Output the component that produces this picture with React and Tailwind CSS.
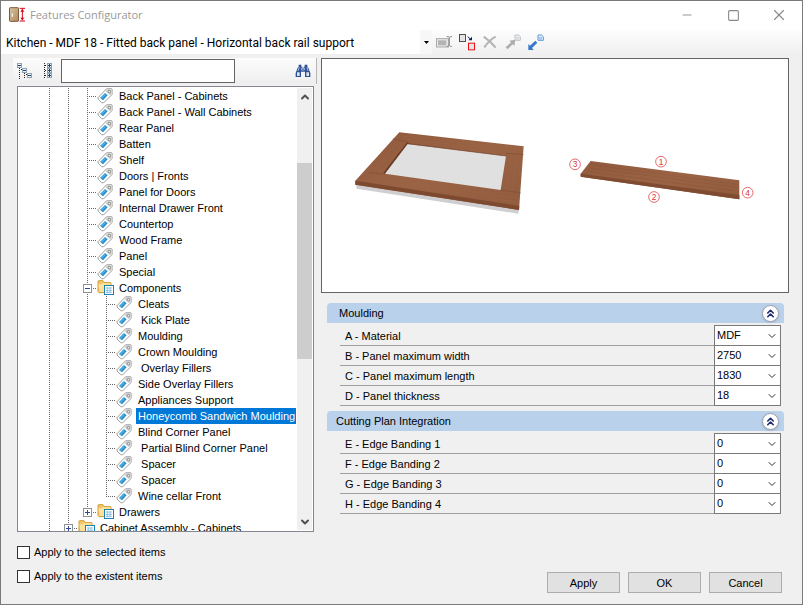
import React, { useState } from 'react'
import { ChevronDown, ChevronUp, ChevronsUp, Minus, Square, X } from 'lucide-react'

// lines: guide columns drawn before the node's own branch
const nodes = [
  { label: 'Back Panel - Cabinets', lines: 2 },
  { label: 'Back Panel - Wall Cabinets', lines: 2 },
  { label: 'Rear Panel', lines: 2 },
  { label: 'Batten', lines: 2 },
  { label: 'Shelf', lines: 2 },
  { label: 'Doors | Fronts', lines: 2 },
  { label: 'Panel for Doors', lines: 2 },
  { label: 'Internal Drawer Front', lines: 2 },
  { label: 'Countertop', lines: 2 },
  { label: 'Wood Frame', lines: 2 },
  { label: 'Panel', lines: 2 },
  { label: 'Special', lines: 2 },
  { label: 'Components', lines: 2, folder: 'open' },
  { label: 'Cleats', lines: 3 },
  { label: ' Kick Plate', lines: 3 },
  { label: 'Moulding', lines: 3 },
  { label: 'Crown Moulding', lines: 3 },
  { label: ' Overlay Fillers', lines: 3 },
  { label: 'Side Overlay Fillers', lines: 3 },
  { label: 'Appliances Support', lines: 3 },
  { label: 'Honeycomb Sandwich Moulding', lines: 3 },
  { label: 'Blind Corner Panel', lines: 3 },
  { label: ' Partial Blind Corner Panel', lines: 3 },
  { label: ' Spacer', lines: 3 },
  { label: ' Spacer', lines: 3 },
  { label: 'Wine cellar Front', lines: 3, last: true },
  { label: 'Drawers', lines: 2, folder: 'closed', last: true },
  { label: 'Cabinet Assembly - Cabinets', lines: 1, folder: 'closed' },
]

const groups = [
  {
    title: ' Moulding',
    fields: [
      { id: 'material', label: 'A - Material', value: 'MDF' },
      { id: 'max-width', label: 'B - Panel maximum width', value: '2750' },
      { id: 'max-length', label: 'C - Panel maximum length', value: '1830' },
      { id: 'thickness', label: 'D - Panel thickness', value: '18' },
    ],
  },
  {
    title: 'Cutting Plan Integration',
    fields: [
      { id: 'edge-1', label: 'E - Edge Banding 1', value: '0' },
      { id: 'edge-2', label: 'F - Edge Banding 2', value: '0' },
      { id: 'edge-3', label: 'G - Edge Banding 3', value: '0' },
      { id: 'edge-4', label: 'H - Edge Banding 4', value: '0' },
    ],
  },
]

function AppIcon() {
  return (
    <svg viewBox="0 0 48 48" className="size-4">
      <defs>
        <linearGradient id="door" x1="0" y1="0" x2="1" y2="1">
          <stop offset="0" stopColor="#d9c3a0" />
          <stop offset="1" stopColor="#b08a5c" />
        </linearGradient>
      </defs>
      <rect x="1.5" y="2" width="27" height="41" rx="2" fill="url(#door)" stroke="#7a5c3c" strokeWidth="3" />
      <path d="M10 19v10" stroke="#f2efe9" strokeWidth="4" />
      <path d="M32 4h16M32 42h16M40 6v34" stroke="#d6001c" strokeWidth="3" />
      <path d="M34 14l6-8 6 8zM34 32l6 8 6-8z" fill="#d6001c" />
    </svg>
  )
}

function TagIcon() {
  return (
    <svg viewBox="0 0 48 48" className="size-4 shrink-0">
      <path d="M3 29L29 2h15l3 3v13L20 44h-6L3 33z" fill="#fff" stroke="#8b8b8b" strokeWidth="2.5" strokeLinejoin="round" />
      <path d="M24 8l5-6h15l3 3v13l-6 6z" fill="#d4d4d4" />
      <circle cx="37" cy="11" r="4" fill="#eee" stroke="#777" strokeWidth="2.5" />
      <path d="M9 30l15-15 8 7-14 15z" fill="#2490d0" />
      <path d="M12 30l12-12 2 2-12 12z" fill="#63b9e8" />
    </svg>
  )
}

function FolderIcon() {
  return (
    <svg viewBox="0 0 48 48" className="size-4 shrink-0 overflow-visible">
      <path d="M3 4q0-2 2-2h13l5 6h19v30H6l-3-3z" fill="#f2c566" stroke="#d39a35" strokeWidth="3" />
      <path d="M4 13h10l3-3h24v5H22v21H8z" fill="#fce29b" />
      <rect x="22.5" y="16.5" width="27" height="27" fill="#fff" stroke="#1b80b8" strokeWidth="3" />
      <path d="M27 24h18M27 31h18M27 37h18M31 22v18M39 22v18" stroke="#8cc4e6" strokeWidth="3" />
    </svg>
  )
}

function Guide({ branch, last, toggle }) {
  return (
    <span className="relative h-4 w-[19px] shrink-0 pl-[9px]">
      <span
        className={`block bg-[repeating-linear-gradient(to_bottom,#666_0px,#666_1px,transparent_1px,transparent_2px)] bg-[length:1px_100%] bg-no-repeat ${last ? 'h-[9px]' : 'h-4'}`}
      >
        {branch && (
          <span className="block h-[9px] bg-[repeating-linear-gradient(to_right,#666_0px,#666_1px,transparent_1px,transparent_2px)] bg-[length:100%_1px] bg-bottom bg-no-repeat" />
        )}
      </span>
      {toggle && (
        <button
          aria-label={toggle === 'open' ? 'Collapse' : 'Expand'}
          className="absolute left-[5px] top-1 flex size-[9px] items-center justify-center border border-[#919191] bg-white"
        >
          <svg viewBox="0 0 5 5" className="size-[5px]" shapeRendering="crispEdges">
            <path d={toggle === 'open' ? 'M0 2h5v1H0z' : 'M0 2h5v1H0zM2 0h1v5H2z'} fill="#2b4a96" />
          </svg>
        </button>
      )}
    </span>
  )
}

function TreeRow({ node, selected, onSelect }) {
  return (
    <li className="flex h-4">
      {Array.from({ length: node.lines }, (_, i) => <Guide key={i} />)}
      <Guide branch last={node.last} toggle={node.folder} />
      {node.folder ? <FolderIcon /> : <TagIcon />}
      <button
        onClick={onSelect}
        className={`ml-1 whitespace-pre px-[2px] leading-4 ${selected ? 'bg-[#0078d7] text-white' : ''}`}
      >
        {node.label}
      </button>
    </li>
  )
}

function TreeToolbar() {
  return (
    <div className="flex h-[26px] items-center border-r border-[#b5b5b5] bg-linear-to-b from-[#fcfcfc] to-[#eeeeee] pl-1 pr-[5px]">
      <button aria-label="Collapse tree">
        <svg viewBox="0 0 16 16" className="size-4" shapeRendering="crispEdges">
          <path d="M2.5 5v11M7.500 10v6" stroke="#222" strokeDasharray="1 1" />
          <path d="M4 6.500h2M9 11.500h2" stroke="#222" strokeDasharray="1 1" />
          <g fill="#eef4f8" stroke="#8ba2b5">
            <path d="M.5 .5h4v4h-4zM5.500 5.500h4v4h-4zM10.500 10.500h4v4h-4z" />
          </g>
          <path d="M1 2.500h3M6 7.500h3M11 12.500h3" stroke="#223f66" />
        </svg>
      </button>
      <button aria-label="Expand tree" className="ml-2">
        <svg viewBox="0 0 16 16" className="size-4" shapeRendering="crispEdges">
          <path d="M3.500 0v16" stroke="#222" strokeDasharray="1 1" />
          <path d="M4 2.500h3M4 7.500h3M4 12.500h3" stroke="#222" strokeDasharray="1 1" />
          <path d="M6.500 .5h4v4h-4zM6.500 5.500h4v4h-4zM6.500 10.500h4v4h-4z" fill="#eef4f8" stroke="#8ba2b5" />
          <path d="M7 2.500h3M7 7.500h3M7 12.500h3M8.500 1v3M8.500 6v3M8.500 11v3" stroke="#223f66" />
        </svg>
      </button>
      <input
        aria-label="Search"
        className="ml-1 h-6 w-[174px] border border-[#646464] bg-white px-1 outline-none"
      />
      <button aria-label="Find" className="ml-auto">
        <svg viewBox="0 0 48 48" className="size-4">
          <path d="M11 5h8v6h3v6h4v-6h3V5h8v6l3 3 6 16v12H30V26H18v16H2V30l6-16 3-3z" fill="#2c4f93" />
          <path d="M6 28h8v11H6zM34 28h8v11h-8z" fill="#d5e3f5" />
          <path d="M13 12l-4 12M19 14v8M29 14v8M36 12l3 12" stroke="#9db9e2" strokeWidth="3" />
          <path d="M21 19h6v5h-6z" fill="#6c8cc4" />
        </svg>
      </button>
    </div>
  )
}

function Tree() {
  const [selected, setSelected] = useState(20)

  return (
    <div className="ml-1 mr-[3px] mt-[2px] flex min-h-0 flex-1 border border-[#828790] bg-white">
      <ul className="min-w-0 flex-1 overflow-hidden pl-[22px] pt-px">
        {nodes.map((node, i) => (
          <TreeRow key={i} node={node} selected={selected === i} onSelect={() => setSelected(i)} />
        ))}
      </ul>
      <div className="m-px flex w-[15px] shrink-0 flex-col bg-[#f0f0f0]">
        <button aria-label="Scroll up" className="flex h-[17px] items-center justify-center text-[#505050]">
          <ChevronUp size={12} strokeWidth={4} />
        </button>
        <div className="flex-[58]" />
        <div className="flex-[197] bg-[#cdcdcd]" />
        <div className="flex-[154]" />
        <button aria-label="Scroll down" className="flex h-[17px] items-center justify-center text-[#505050]">
          <ChevronDown size={12} strokeWidth={4} />
        </button>
      </div>
    </div>
  )
}

function CheckRow({ id, label }) {
  return (
    <div className="ml-1 flex h-6 items-center gap-1">
      <input id={id} type="checkbox" className="size-[13px] appearance-none border border-[#333] bg-white checked:bg-[#0078d7]" />
      <label htmlFor={id}>{label}</label>
    </div>
  )
}

function Preview() {
  const marks = [
    { n: 1, x: 303, y: 65 },
    { n: 2, x: 282, y: 171 },
    { n: 3, x: 45, y: 73 },
    { n: 4, x: 563, y: 158 },
  ]

  return (
    <div className="aspect-[468/235] border border-[#646464] bg-white">
      <svg viewBox="0 0 466 233" className="size-full">
        <defs>
          <linearGradient id="wood" x1="0" y1="0" x2="1" y2="1">
            <stop offset="0" stopColor="#91593d" />
            <stop offset="0.5" stopColor="#9a6344" />
            <stop offset="1" stopColor="#915b3e" />
          </linearGradient>
        </defs>
        {/* framed door */}
        <g transform="translate(18 61) scale(0.33333)">
          <path d="M48 194l2 12 485 75 2-14z" fill="#cfcfd1" />
          <path d="M178 37L551 79 537 270 46 194V182z" fill="url(#wood)" />
          <path d="M46 182l492 76-1 12L46 194z" fill="#7d4a2f" />
          <path d="M130 158L202 66l6 7-72 90z" fill="#6a3c26" />
          <path d="M203 72l295 36-16 102-347-49z" fill="#e0e0e0" />
          <path d="M203 71l295 37" stroke="#6f412b" strokeWidth="2" />
          <path d="M158 56l45 10M87 158l46 4M498 100l53 4M482 210l60 8" stroke="#7c492f" strokeWidth="1.500" />
          <path
            d="M190 48l340 37M200 58l330 36M100 172l420 62M80 178l450 68M165 75l-58 74M185 78l-64 82M530 110l-12 100M512 112l-14 92"
            stroke="#a06a48"
            strokeWidth="2"
            opacity="0.5"
          />
        </g>
        {/* edge banding strip */}
        <g transform="translate(238 81) scale(0.33333)">
          <path d="M92 63l446 58v57L62 110v-9z" fill="url(#wood)" />
          <path d="M62 101l476 64v13L62 110z" fill="#7f4c31" />
          <path d="M100 75l430 58M90 84l440 58M82 94l440 58" stroke="#7c4930" strokeWidth="2" opacity="0.3" />
          {marks.map((m) => (
            <g key={m.n}>
              <circle cx={m.x} cy={m.y} r="16" fill="#fff" stroke="#e24a50" strokeWidth="2.500" />
              <text x={m.x} y={m.y + 9} textAnchor="middle" fontSize="25" fill="#d8343c" className="font-['Liberation_Sans',sans-serif]">
                {m.n}
              </text>
            </g>
          ))}
        </g>
      </svg>
    </div>
  )
}

function Field({ field }) {
  return (
    <div className="flex h-5 items-end">
      <label htmlFor={field.id} className="h-5 flex-1 border-b border-[#a0a0a0] pl-[5px] leading-5">
        {field.label}
      </label>
      <div className="relative -mt-px h-[21px] w-[67px] shrink-0">
        <select id={field.id} className="block h-full w-full appearance-none border border-[#7a7a7a] bg-white pb-px pl-[2px] leading-4 outline-none">
          <option>{field.value}</option>
        </select>
        <ChevronDown size={12} strokeWidth={2} className="pointer-events-none absolute right-[3px] top-[5px] text-[#333]" />
      </div>
    </div>
  )
}

function Group({ group }) {
  return (
    <section className="mb-[5px] ml-[6px] mr-[5px]">
      <header className="flex h-5 items-center justify-between rounded-t-[4px] bg-[#b9d1ea] pl-[9px] pr-[5px]">
        <h2 className="whitespace-pre">{group.title}</h2>
        <button
          aria-label={`Collapse ${group.title.trim()}`}
          className="flex size-[17px] items-center justify-center rounded-full border border-[#9c9cae] bg-white text-[#1c2a6b] shadow"
        >
          <ChevronsUp size={13} strokeWidth={3} />
        </button>
      </header>
      <div className="ml-[13px] mr-[3px] pt-[3px]">
        {group.fields.map((field) => <Field key={field.id} field={field} />)}
      </div>
    </section>
  )
}

function ConfigToolbar() {
  return (
    <div className="flex h-6 items-center bg-linear-to-b from-[#fdfdfd] to-[#f0f0f0]">
      <div className="relative h-full w-[431px]">
        <select aria-label="Configuration" className="h-full w-full appearance-none bg-white pl-[5px] pt-px font-[Roboto,sans-serif] text-[12px] outline-none">
          <option>Kitchen - MDF 18 - Fitted back panel - Horizontal back rail support</option>
        </select>
        <span className="pointer-events-none absolute right-0 top-0 flex h-full w-3 items-center justify-center bg-[#f7f7f7]">
          <svg viewBox="0 0 5 3" className="h-[3px] w-[5px]"><path d="M0 0h5L2.500 3z" fill="#000" /></svg>
        </span>
      </div>
      <div className="ml-1 flex gap-[7px]">
        <button aria-label="Rename">
          <svg viewBox="0 0 48 48" className="size-4">
            <rect x="1.500" y="14" width="36" height="25" fill="#e8e8e8" stroke="#aaa" strokeWidth="3" />
            <rect x="6" y="19" width="25" height="15" fill="#b4b4b4" />
            <path d="M32 8h5l3 2 3-2h5M40 10v24M32 37h5l3-3 3 3h5" fill="none" stroke="#888" strokeWidth="3" />
          </svg>
        </button>
        <button aria-label="Duplicate">
          <svg viewBox="0 0 48 48" className="size-4 overflow-visible">
            <rect x="1.500" y="1.500" width="18" height="21" fill="#e4e4ea" stroke="#5a4a4a" strokeWidth="3" />
            <path d="M26 8l8 7" stroke="#0b1f6b" strokeWidth="3" />
            <path d="M39 8v11H28z" fill="#0b1f6b" />
            <rect x="28.500" y="27.500" width="18" height="20" fill="#e4e4ea" stroke="#ee1111" strokeWidth="3" />
          </svg>
        </button>
        <button aria-label="Delete">
          <svg viewBox="0 0 48 48" className="size-4">
            <path d="M5 8q18 12 36 33M41 8Q22 18 7 40" fill="none" stroke="#b4b4b4" strokeWidth="6" />
          </svg>
        </button>
        <button aria-label="Import"><TransferIcon arrow="#adadad" page="#c2c2c2" up /></button>
        <button aria-label="Export"><TransferIcon arrow="#3578c9" page="#5a9be0" /></button>
      </div>
    </div>
  )
}

function TransferIcon({ arrow, page, up }) {
  return (
    <svg viewBox="0 0 48 48" className="size-4 overflow-visible">
      <path
        d={up ? 'M2 40l16-15-5-5 18-3-3 19-5-5L8 46z' : 'M1 48V30l5 5 16-15 6 6-16 16 5 6z'}
        fill={arrow}
      />
      <path d="M30 3h11l5 5v11H30z" fill="#e9f2fb" stroke={page} strokeWidth="3" />
      <path d="M33 11h9M33 15h9" stroke={page} strokeWidth="2" />
    </svg>
  )
}

export default function App() {
  return (
    <div className="flex h-screen flex-col border border-[#7a7a7a] bg-[#f0f0f0] font-['Liberation_Sans',sans-serif] text-[11px] leading-4 text-black">
      <div className="flex h-[29px] shrink-0 items-center bg-white pb-px pl-2">
        <AppIcon />
        <h1 className="ml-[5px] flex-1 font-['Open_Sans',sans-serif] text-[11px] text-[#999]">Features Configurator</h1>
        <div className="flex text-[#888]">
          <button aria-label="Minimize" className="flex w-[46px] items-center justify-center"><Minus size={14} strokeWidth={1.500} /></button>
          <button aria-label="Maximize" className="flex w-[46px] items-center justify-center"><Square size={13} strokeWidth={2} strokeLinejoin="miter" /></button>
          <button aria-label="Close" className="flex w-[46px] items-center justify-center"><X size={18} strokeWidth={1.500} /></button>
        </div>
      </div>

      <ConfigToolbar />

      <main className="grid min-h-0 flex-1 grid-cols-[minmax(0,304fr)_minmax(0,468fr)] gap-1 pl-3 pr-[13px] pt-1">
        <div className="flex min-h-0 flex-col pb-4">
          <TreeToolbar />
          <Tree />
          <div className="mt-2">
            <CheckRow id="apply-selected" label="Apply to the selected items" />
            <CheckRow id="apply-existent" label="Apply to the existent items" />
          </div>
        </div>

        <div className="flex flex-col pb-[11px]">
          <Preview />
          <div className="mt-[10px]">
            {groups.map((group) => <Group key={group.title} group={group} />)}
          </div>
          <div className="mr-[7px] mt-auto flex justify-end gap-2">
            {['Apply', 'OK', 'Cancel'].map((text) => (
              <button key={text} className="h-[21px] w-[73px] border border-[#adadad] bg-[#e1e1e1] text-[11px] leading-4">
                {text}
              </button>
            ))}
          </div>
        </div>
      </main>
    </div>
  )
}
